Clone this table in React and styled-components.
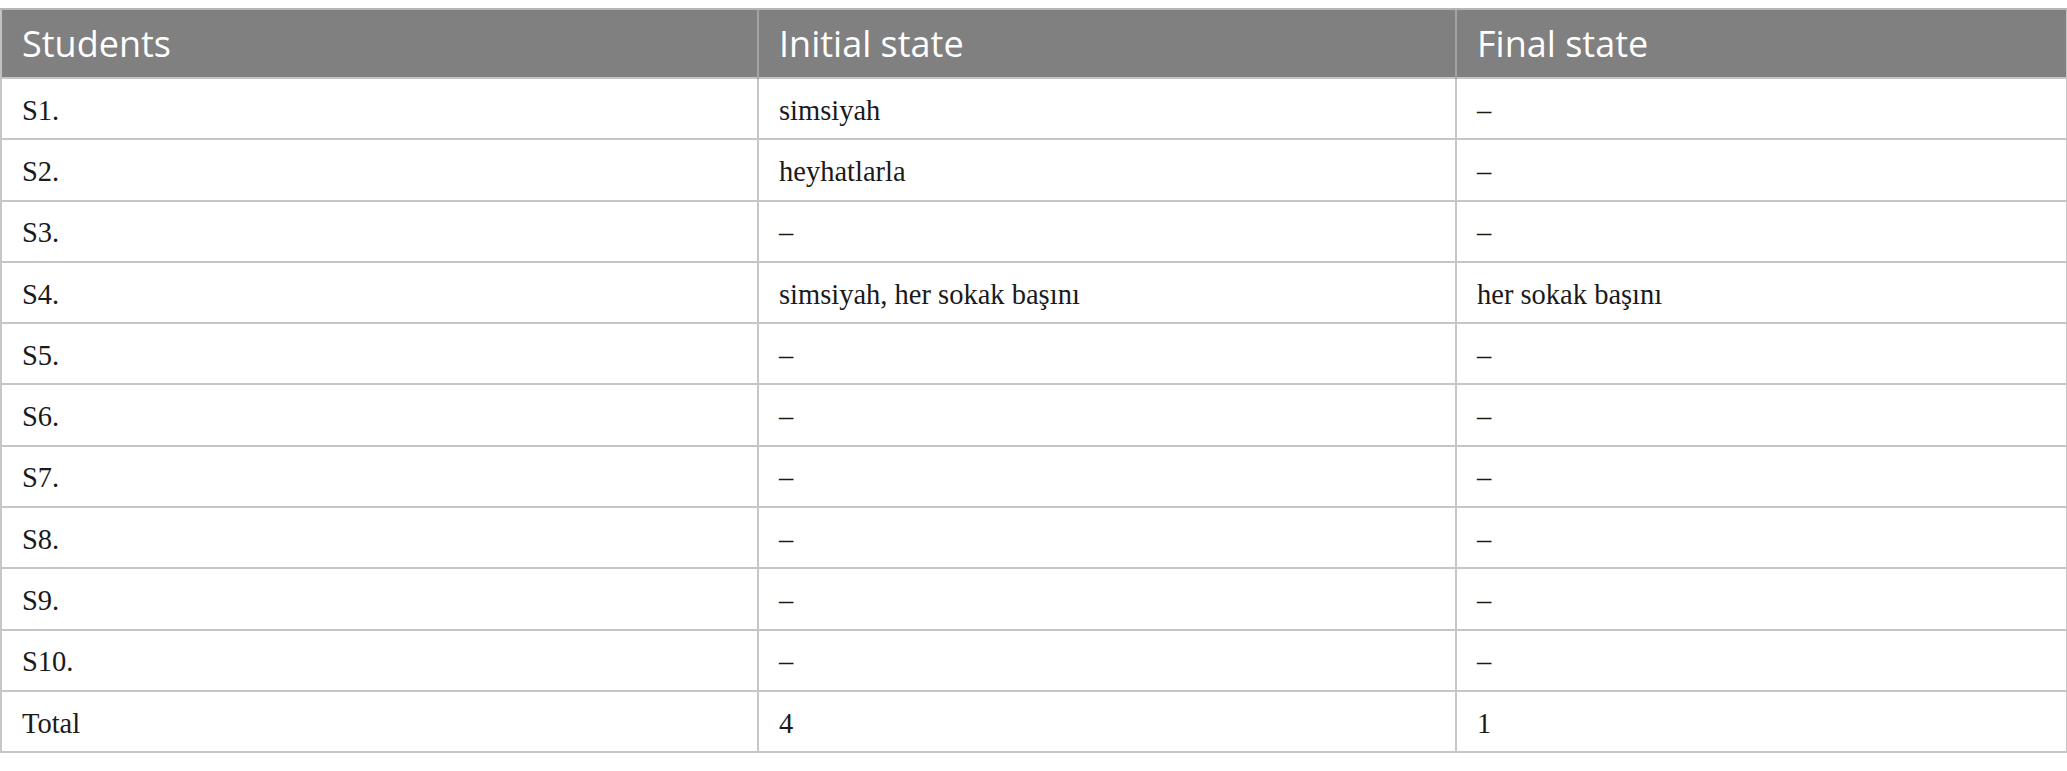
import React from 'react';
import styled, { createGlobalStyle } from 'styled-components';

const GlobalStyle = createGlobalStyle`
  html, body {
    margin: 0;
    padding: 0;
    background: #ffffff;
  }
`;

const Page = styled.div`
  padding-top: 8px;
  width: 2067px;
`;

const Table = styled.table`
  width: 2066px;
  border-collapse: collapse;
  table-layout: fixed;
  border: 2px solid #c2c2c2;
`;

const HeadCell = styled.th`
  height: 67px;
  padding: 0 20px;
  background: #7f807f;
  color: #ffffff;
  font-family: 'Open Sans', 'Noto Sans', sans-serif;
  font-weight: 400;
  font-size: 36px;
  text-align: left;
  border-left: 2px solid #a3a3a3;
  border-top: 2px solid #b5b5b5;
  &:first-child {
    border-left: 2px solid #c2c2c2;
  }
`;

const Row = styled.tr`
  height: 61.3px;
`;

const Cell = styled.td`
  padding: 4px 20px 0;
  font-family: 'Liberation Serif', 'Times New Roman', serif;
  font-size: 28.5px;
  color: #1a1a1a;
  border: 2px solid #c6c6c6;
  white-space: nowrap;
`;

const columns = [
  { title: 'Students', width: 757 },
  { title: 'Initial state', width: 698 },
  { title: 'Final state', width: 611 },
];

const rows = [
  ['S1.', 'simsiyah', '–'],
  ['S2.', 'heyhatlarla', '–'],
  ['S3.', '–', '–'],
  ['S4.', 'simsiyah, her sokak başını', 'her sokak başını'],
  ['S5.', '–', '–'],
  ['S6.', '–', '–'],
  ['S7.', '–', '–'],
  ['S8.', '–', '–'],
  ['S9.', '–', '–'],
  ['S10.', '–', '–'],
  ['Total', '4', '1'],
];

export default function App() {
  return (
    <Page>
      <GlobalStyle />
      <Table>
        <colgroup>
          {columns.map((c) => (
            <col key={c.title} style={{ width: c.width }} />
          ))}
        </colgroup>
        <thead>
          <tr>
            {columns.map((c) => (
              <HeadCell key={c.title}>{c.title}</HeadCell>
            ))}
          </tr>
        </thead>
        <tbody>
          {rows.map((r) => (
            <Row key={r[0]}>
              {r.map((v, i) => (
                <Cell key={i}>{v}</Cell>
              ))}
            </Row>
          ))}
        </tbody>
      </Table>
    </Page>
  );
}
